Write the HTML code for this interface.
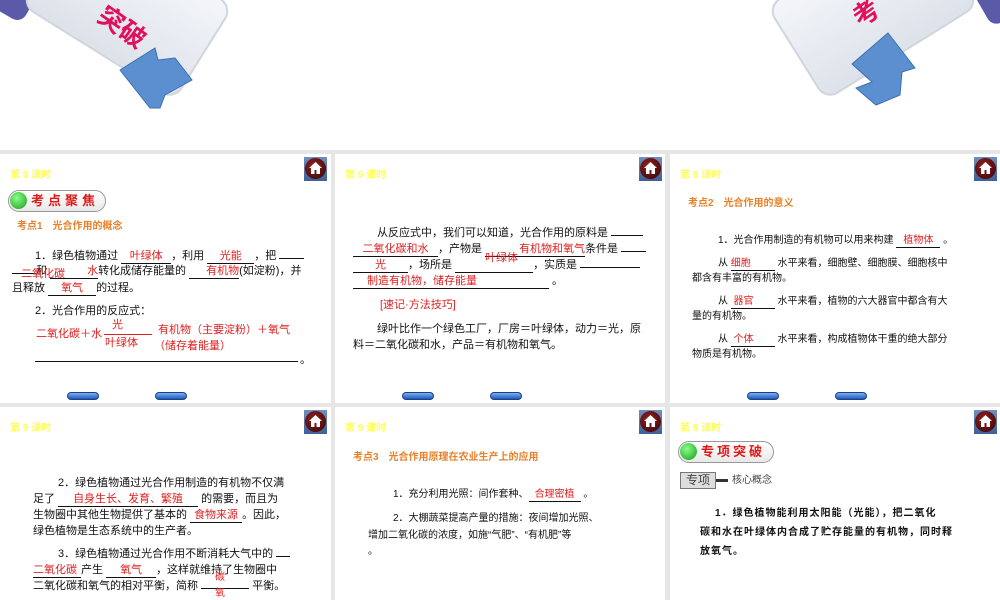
<!DOCTYPE html>
<html><head><meta charset="utf-8"><style>
*{margin:0;padding:0;box-sizing:border-box}
body{width:1000px;height:600px;overflow:hidden;background:#e6e6e6;position:relative;font-family:"Liberation Sans","Noto Sans CJK SC",sans-serif;font-size:11px;color:#111}
.top{position:absolute;left:0;top:0;width:1000px;height:150px;background:#fff;overflow:hidden}
.p{position:absolute;background:#fff;overflow:hidden}
.t{position:absolute;white-space:nowrap;line-height:14px}
.ks{position:absolute;color:#ffff55;font-size:10px;font-weight:bold}
.home{position:absolute;width:23px;height:24px;background:linear-gradient(#6f8fc0,#3f5f98);}
.home:after{content:"";position:absolute;left:1px;top:1px;width:21px;height:21px;border-radius:50%;background:radial-gradient(circle at 40% 35%,#8a2020,#3a0505)}
.home svg{position:absolute;left:5px;top:5px;z-index:2}
.b{display:inline-block;border-bottom:1px solid #111;text-align:center;color:#e02020;line-height:13px}
.r{color:#e02020}
.o{color:#e8802a;font-weight:bold}
.nav{position:absolute;width:32px;height:8px;border-radius:4px;background:linear-gradient(#7ab0f0,#1f58b8);border:1px solid #1a3f8a}
.pill{position:absolute;height:22px;border:1.5px solid #999;border-radius:11px;background:linear-gradient(#fff,#e8e8e8);color:#e01818;font-weight:bold;font-size:13px;letter-spacing:4px;padding-left:22px;line-height:19px;white-space:nowrap;overflow:hidden}
.pill:before{content:"";position:absolute;left:1px;top:1px;width:17px;height:17px;border-radius:50%;background:radial-gradient(circle at 40% 35%,#8f8,#1a9a1a)}
</style></head><body>
<div class="top">
 <svg width="1000" height="150" style="position:absolute;left:0;top:0">
  <defs><linearGradient id="g" x1="0" y1="0" x2="0" y2="1"><stop offset="0" stop-color="#f4f6fa"/><stop offset="1" stop-color="#dde2ea"/></linearGradient></defs>
  <rect x="-30" y="-40" width="60" height="50" rx="10" fill="#5a5aa8" transform="rotate(30 0 0)"/>
  <g transform="rotate(32 100 30)">
   <rect x="20" y="-60" width="180" height="110" rx="14" fill="url(#g)" stroke="#d0d5de" stroke-width="2"/>
  </g>
  <text x="98" y="28" font-size="26" font-weight="bold" fill="#e0105a" transform="rotate(35 110 20)" font-family="Noto Sans CJK SC">突破</text>
  <path d="M120 70 L155 48 L158 60 L175 58 L192 80 L165 95 L160 108 L150 108Z" fill="#5b8fcf" stroke="#3e70b0"/>
  <rect x="980" y="-30" width="50" height="50" rx="10" fill="#5a5aa8" transform="rotate(-30 1000 0)"/>
  <g transform="rotate(-32 900 30)">
   <rect x="800" y="-60" width="180" height="110" rx="14" fill="url(#g)" stroke="#d0d5de" stroke-width="2"/>
  </g>
  <text x="855" y="20" font-size="26" font-weight="bold" fill="#e0105a" transform="rotate(-35 870 15)" font-family="Noto Sans CJK SC">考</text>
  <path d="M888 33 L915 68 L902 72 L900 95 L876 105 L856 88 L872 82 L852 64Z" fill="#5b8fcf" stroke="#3e70b0"/>
 </svg>
</div>

<!-- Panel 1 -->
<div class="p" style="left:0;top:154px;width:331px;height:249px">
 <div class="ks" style="left:10px;top:12px">第 9 课时</div>
 <div class="home" style="left:304px;top:3px"><svg width="13" height="12" viewBox="0 0 13 12"><path d="M6.5 0L0 6h2v6h3.5V8h2v4H11V6h2z" fill="#fff"/></svg></div>
 <div class="pill" style="left:8px;top:36px;width:98px">考点聚焦</div>
 <div class="t o" style="left:17px;top:66px;font-size:10px">考点1　光合作用的概念</div>
 <div class="t" style="left:35px;top:95px">1．绿色植物通过 <span class="b" style="width:50px">叶绿体</span>，利用 <span class="b" style="width:47px">光能</span>，把 <span class="b" style="width:25px"></span></div>
 <div class="t" style="left:12px;top:110px"><span class="b" style="width:24px;position:relative"><span style="position:absolute;left:9px;top:-5px">二氧化碳</span></span>和 <span class="b" style="width:48px;text-align:right">水</span>转化成储存能量的 <span class="b" style="width:50px;text-align:right">有机物</span>(如淀粉)，并</div>
 <div class="t" style="left:12px;top:127px">且释放 <span class="b" style="width:48px">氧气</span>的过程。</div>
 <div class="t" style="left:35px;top:150px">2．光合作用的反应式：</div>
 <div class="t r" style="left:36px;top:173px">二氧化碳＋水</div>
 <div class="t r" style="left:112px;top:164px">光</div>
 <div style="position:absolute;left:104px;top:180px;width:48px;border-top:1px solid #e02020"></div>
 <div class="t r" style="left:105px;top:182px">叶绿体</div>
 <div class="t r" style="left:158px;top:169px">有机物（主要淀粉）＋氧气</div>
 <div class="t r" style="left:154px;top:185px">（储存着能量）</div>
 <div style="position:absolute;left:35px;top:207px;width:263px;border-top:1px solid #111"></div>
 <div class="t" style="left:300px;top:199px">。</div>
 <div class="nav" style="left:67px;top:238px"></div><div class="nav" style="left:155px;top:238px"></div>
</div>

<!-- Panel 2 -->
<div class="p" style="left:335px;top:154px;width:330px;height:249px">
 <div class="ks" style="left:10px;top:12px">第 9 课时</div>
 <div class="home" style="left:304px;top:3px"><svg width="13" height="12" viewBox="0 0 13 12"><path d="M6.5 0L0 6h2v6h3.5V8h2v4H11V6h2z" fill="#fff"/></svg></div>
 <div class="t" style="left:42px;top:72px">从反应式中，我们可以知道，光合作用的原料是 <span class="b" style="width:32px"></span></div>
 <div class="t" style="left:18px;top:88px"><span class="b" style="width:85px">二氧化碳和水</span>，产物是 <span class="b" style="width:100px;text-align:right">有机物和氧气</span>条件是 <span class="b" style="width:25px"></span></div>
 <div class="t" style="left:18px;top:104px"><span class="b" style="width:55px">光</span>，场所是 <span class="b" style="width:78px;position:relative"><span style="position:absolute;left:30px;top:-7px">叶绿体</span>&nbsp;</span>，实质是 <span class="b" style="width:60px"></span></div>
 <div class="t" style="left:18px;top:120px"><span class="b" style="width:196px;text-align:left;padding-left:14px">制造有机物，储存能量</span> 。</div>
 <div class="t r" style="left:45px;top:144px">[速记·方法技巧]</div>
 <div class="t" style="left:42px;top:168px">绿叶比作一个绿色工厂，厂房＝叶绿体，动力＝光，原</div>
 <div class="t" style="left:18px;top:184px">料＝二氧化碳和水，产品＝有机物和氧气。</div>
 <div class="nav" style="left:67px;top:238px"></div><div class="nav" style="left:155px;top:238px"></div>
</div>

<!-- Panel 3 -->
<div class="p" style="left:670px;top:154px;width:330px;height:249px">
 <div class="ks" style="left:10px;top:12px">第 9 课时</div>
 <div class="home" style="left:304px;top:3px"><svg width="13" height="12" viewBox="0 0 13 12"><path d="M6.5 0L0 6h2v6h3.5V8h2v4H11V6h2z" fill="#fff"/></svg></div>
 <div class="t o" style="left:18px;top:43px;font-size:10px">考点2　光合作用的意义</div>
 <div class="t" style="left:48px;top:80px;font-size:10px">1．光合作用制造的有机物可以用来构建 <span class="b" style="width:44px">植物体</span> 。</div>
 <div class="t" style="left:48px;top:103px;font-size:10px">从 <span class="b" style="width:44px;text-align:left">细胞</span> 水平来看，细胞壁、细胞膜、细胞核中</div>
 <div class="t" style="left:22px;top:118px;font-size:10px">都含有丰富的有机物。</div>
 <div class="t" style="left:48px;top:141px;font-size:10px">从 <span class="b" style="width:44px;text-align:left">&nbsp;器官</span> 水平来看，植物的六大器官中都含有大</div>
 <div class="t" style="left:22px;top:156px;font-size:10px">量的有机物。</div>
 <div class="t" style="left:48px;top:179px;font-size:10px">从 <span class="b" style="width:44px;text-align:left">&nbsp;个体</span> 水平来看，构成植物体干重的绝大部分</div>
 <div class="t" style="left:22px;top:194px;font-size:10px">物质是有机物。</div>
 <div class="nav" style="left:77px;top:238px"></div><div class="nav" style="left:165px;top:238px"></div>
</div>

<!-- Row 2 Panel 1 -->
<div class="p" style="left:0;top:407px;width:331px;height:193px">
 <div class="ks" style="left:10px;top:12px">第 9 课时</div>
 <div class="home" style="left:304px;top:3px"><svg width="13" height="12" viewBox="0 0 13 12"><path d="M6.5 0L0 6h2v6h3.5V8h2v4H11V6h2z" fill="#fff"/></svg></div>
 <div class="t" style="left:58px;top:69px">2．绿色植物通过光合作用制造的有机物不仅满</div>
 <div class="t" style="left:33px;top:85px">足了 <span class="b" style="width:140px">自身生长、发育、繁殖</span> 的需要，而且为</div>
 <div class="t" style="left:33px;top:101px">生物圈中其他生物提供了基本的 <span class="b" style="width:52px">食物来源</span>。因此，</div>
 <div class="t" style="left:33px;top:117px">绿色植物是生态系统中的生产者。</div>
 <div class="t" style="left:58px;top:140px">3．绿色植物通过光合作用不断消耗大气中的 <span class="b" style="width:14px"></span></div>
 <div class="t" style="left:33px;top:156px"><span class="b" style="width:48px;text-align:left">二氧化碳</span>产生 <span class="b" style="width:50px">氧气</span>，这样就维持了生物圈中</div>
 <div class="t r" style="left:215px;top:164px;font-size:10px">碳</div>
 <div class="t" style="left:33px;top:172px">二氧化碳和氧气的相对平衡，简称 <span class="b" style="width:48px"></span> 平衡。</div>
 <div class="t r" style="left:215px;top:180px;font-size:10px">氧</div>
</div>

<!-- Row 2 Panel 2 -->
<div class="p" style="left:335px;top:407px;width:330px;height:193px">
 <div class="ks" style="left:10px;top:12px">第 9 课时</div>
 <div class="home" style="left:304px;top:3px"><svg width="13" height="12" viewBox="0 0 13 12"><path d="M6.5 0L0 6h2v6h3.5V8h2v4H11V6h2z" fill="#fff"/></svg></div>
 <div class="t o" style="left:18px;top:44px;font-size:10px">考点3　光合作用原理在农业生产上的应用</div>
 <div class="t" style="left:58px;top:81px;font-size:10px">1．充分利用光照：间作套种、<span class="b" style="width:52px">合理密植</span> 。</div>
 <div class="t" style="left:58px;top:105px;font-size:10px">2．大棚蔬菜提高产量的措施：夜间增加光照、</div>
 <div class="t" style="left:33px;top:122px;font-size:10px">增加二氧化碳的浓度，如施“气肥”、“有机肥”等</div>
 <div class="t" style="left:33px;top:138px;font-size:10px">。</div>
</div>

<!-- Row 2 Panel 3 -->
<div class="p" style="left:670px;top:407px;width:330px;height:193px">
 <div class="ks" style="left:10px;top:12px">第 9 课时</div>
 <div class="home" style="left:304px;top:3px"><svg width="13" height="12" viewBox="0 0 13 12"><path d="M6.5 0L0 6h2v6h3.5V8h2v4H11V6h2z" fill="#fff"/></svg></div>
 <div class="pill" style="left:8px;top:34px;width:96px;letter-spacing:3px">专项突破</div>
 <div style="position:absolute;left:10px;top:65px;width:36px;height:17px;border:1px solid #777;background:#ddd;font-size:12px;line-height:15px;text-align:center;color:#444">专项</div>
 <div style="position:absolute;left:46px;top:72px;width:12px;height:3px;background:#333"></div>
 <div class="t" style="left:62px;top:67px;font-size:10px;color:#444">核心概念</div>
 <div class="t" style="left:45px;top:100px;font-size:10px;font-weight:bold;letter-spacing:1px">1．绿色植物能利用太阳能（光能），把二氧化</div>
 <div class="t" style="left:30px;top:119px;font-size:10px;font-weight:bold;letter-spacing:1px">碳和水在叶绿体内合成了贮存能量的有机物，同时释</div>
 <div class="t" style="left:30px;top:138px;font-size:10px;font-weight:bold;letter-spacing:1px">放氧气。</div>
</div>
</body></html>
